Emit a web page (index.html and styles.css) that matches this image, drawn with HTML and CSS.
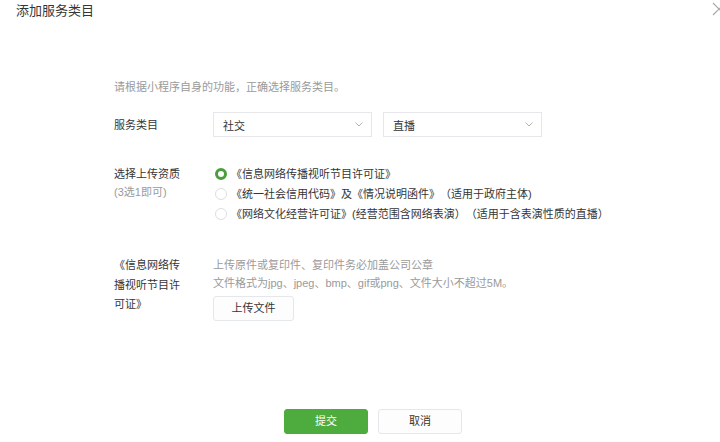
FILE: index.html
```html
<!DOCTYPE html>
<html lang="zh-CN">
<head>
<meta charset="utf-8">
<title>添加服务类目</title>
<link rel="stylesheet" href="styles.css">
</head>
<body>
<div class="dialog">
  <header class="dlg-head">
    <h1 class="dlg-title">添加服务类目</h1>
    <svg class="dlg-close" viewBox="0 0 14 14" aria-label="关闭"><path d="M1 1L13 13M13 1L1 13" stroke="#a8a8a8" stroke-width="1.2" fill="none"/></svg>
  </header>
  <div class="dlg-body">
    <p class="hint">请根据小程序自身的功能，正确选择服务类目。</p>
    <div class="row row-select">
      <div class="label">服务类目</div>
      <div class="selects">
        <div class="select"><span>社交</span><svg class="arrow" viewBox="0 0 8 5"><polyline points="0.5,0.5 4,4 7.5,0.5" fill="none" stroke="#b2b2b2" stroke-width="1"/></svg></div>
        <div class="select"><span>直播</span><svg class="arrow" viewBox="0 0 8 5"><polyline points="0.5,0.5 4,4 7.5,0.5" fill="none" stroke="#b2b2b2" stroke-width="1"/></svg></div>
      </div>
    </div>
    <div class="row row-radio">
      <div class="label">选择上传资质<span class="sub">(3选1即可)</span></div>
      <ul class="radios">
        <li class="radio"><i class="dot checked"></i>《信息网络传播视听节目许可证》</li>
        <li class="radio"><i class="dot"></i>《统一社会信用代码》及《情况说明函件》（适用于政府主体)</li>
        <li class="radio"><i class="dot"></i>《网络文化经营许可证》(经营范围含网络表演）（适用于含表演性质的直播）</li>
      </ul>
    </div>
    <div class="row row-upload">
      <div class="label label-doc">《信息网络传播视听节目许可证》</div>
      <div class="upload">
        <p class="tip">上传原件或复印件、复印件务必加盖公司公章</p>
        <p class="tip">文件格式为jpg、jpeg、bmp、gif或png、文件大小不超过5M。</p>
        <button class="btn btn-upload">上传文件</button>
      </div>
    </div>
  </div>
  <footer class="dlg-foot">
    <button class="btn btn-primary">提交</button>
    <button class="btn btn-default">取消</button>
  </footer>
</div>
</body>
</html>
```

FILE: styles.css
```css
html, body {
  margin: 0;
  padding: 0;
  background: #fff;
}
body {
  width: 720px;
  height: 442px;
  overflow: hidden;
  font-family: "Liberation Sans", "Noto Sans CJK SC", sans-serif;
  font-size: 11px;
  color: #353535;
  text-spacing-trim: space-all;
}
.dialog {
  position: relative;
}
.dlg-head {
  height: 22px;
  padding-left: 16px;
}
.dlg-title {
  margin: 0;
  font-size: 13px;
  font-weight: normal;
  line-height: 22px;
  color: #353535;
}
.dlg-close {
  position: absolute;
  left: 712px;
  top: 2px;
  width: 14px;
  height: 14px;
}
.dlg-body {
  padding-left: 114px;
  padding-top: 55px;
}
.hint {
  margin: 0;
  line-height: 20px;
  color: #9a9a9a;
}
.row {
  display: grid;
  grid-template-columns: 99px auto;
}
.row-select {
  margin-top: 15px;
  align-items: center;
}
.label {
  line-height: 20px;
}
.selects {
  display: flex;
  gap: 11px;
}
.select {
  width: 159px;
  height: 25px;
  box-sizing: border-box;
  border: 1px solid #e7e7eb;
  display: flex;
  align-items: center;
  justify-content: space-between;
  padding: 0 8px 0 9px;
}
.arrow {
  width: 8px;
  height: 5px;
}
.row-radio {
  margin-top: 27px;
}
.sub {
  display: block;
  line-height: 16px;
  color: #9a9a9a;
}
.radios {
  list-style: none;
  margin: 0;
  padding: 0;
}
.radio {
  display: flex;
  align-items: center;
  line-height: 20px;
  white-space: nowrap;
}
.dot {
  width: 12px;
  height: 12px;
  box-sizing: border-box;
  border-radius: 50%;
  border: 1px solid #dedede;
  background: #fff;
  margin-left: 2px;
  margin-right: 4px;
  flex: none;
}
.dot.checked {
  border: 3px solid #4a9e3b;
}
.row-upload {
  margin-top: 32px;
}
.label-doc {
  width: 70px;
  line-height: 19.5px;
}
.tip {
  margin: 0;
  line-height: 18px;
  color: #9a9a9a;
}
.btn {
  box-sizing: border-box;
  height: 25px;
  border: 1px solid #e4e8eb;
  border-radius: 3px;
  background: #fdfdfd;
  font-family: inherit;
  font-size: 11px;
  color: #353535;
  padding: 0;
  line-height: 23px;
}
.btn-upload {
  display: block;
  margin-top: 4px;
  width: 81px;
}
.dlg-foot {
  display: flex;
  gap: 10px;
  padding-left: 284px;
  margin-top: 88px;
}
.btn-primary,
.btn-default {
  width: 84px;
}
.btn-primary {
  background: #4eab3e;
  border-color: #4eab3e;
  color: #fff;
}
```
